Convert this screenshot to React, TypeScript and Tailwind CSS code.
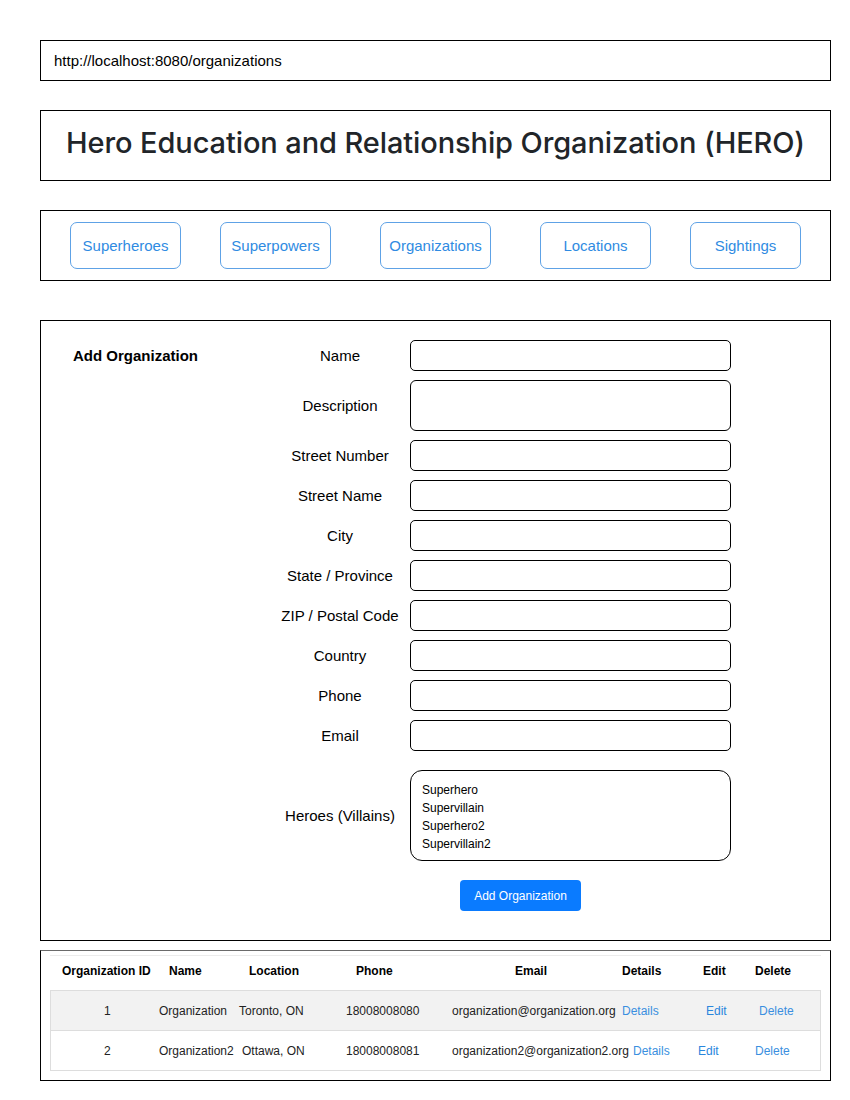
import React from 'react';

const navItems = [
  { label: 'Superheroes', ml: 'ml-[29px]' },
  { label: 'Superpowers', ml: 'ml-[39px]' },
  { label: 'Organizations', ml: 'ml-[49px]' },
  { label: 'Locations', ml: 'ml-[49px]' },
  { label: 'Sightings', ml: 'ml-[39px]' },
];

const fields = [
  { label: 'Name', h: 'h-[31px]' },
  { label: 'Description', h: 'h-[51px]' },
  { label: 'Street Number', h: 'h-[31px]' },
  { label: 'Street Name', h: 'h-[31px]' },
  { label: 'City', h: 'h-[31px]' },
  { label: 'State / Province', h: 'h-[31px]' },
  { label: 'ZIP / Postal Code', h: 'h-[31px]' },
  { label: 'Country', h: 'h-[31px]' },
  { label: 'Phone', h: 'h-[31px]' },
  { label: 'Email', h: 'h-[31px]' },
];

const heroes = ['Superhero', 'Supervillain', 'Superhero2', 'Supervillain2'];

// cell widths are spacing from one text start to the next
const headW = ['w-[107px]', 'w-[80px]', 'w-[107px]', 'w-[159px]', 'w-[107px]', 'w-[81px]', 'w-[52px]', 'w-[60px]'];
const row1W = ['w-[55px]', 'w-[80px]', 'w-[107px]', 'w-[106px]', 'w-[170px]', 'w-[84px]', 'w-[53px]', 'w-[50px]'];
const row2W = ['w-[55px]', 'w-[83px]', 'w-[104px]', 'w-[106px]', 'w-[181px]', 'w-[65px]', 'w-[57px]', 'w-[50px]'];

const headers = ['Organization ID', 'Name', 'Location', 'Phone', 'Email', 'Details', 'Edit', 'Delete'];
const rows = [
  { cells: ['1', 'Organization', 'Toronto, ON', '18008008080', 'organization@organization.org'], widths: row1W, bg: 'bg-[#f2f2f2]' },
  { cells: ['2', 'Organization2', 'Ottawa, ON', '18008008081', 'organization2@organization2.org'], widths: row2W, bg: 'bg-white' },
];

export default function App() {
  return (
    <div className="min-h-screen w-[850px] bg-white font-['Liberation_Sans',Arial,sans-serif] text-black">
      <div className="pt-[40px] pl-[40px]">
        {/* url bar */}
        <div className="w-[791px] h-[41px] border border-black flex items-center pl-[13px] pt-[2px] text-[15px]">
          http://localhost:8080/organizations
        </div>

        {/* title */}
        <div className="mt-[29px] w-[791px] h-[71px] border border-black flex items-center justify-center pb-[6px]">
          <h1 className="font-['Inter',sans-serif] text-[29px] font-medium text-[#212529] tracking-[-0.1px]">
            Hero Education and Relationship Organization (HERO)
          </h1>
        </div>

        {/* nav */}
        <div className="mt-[29px] w-[791px] h-[71px] border border-black flex items-center">
          {navItems.map((n) => (
            <button
              key={n.label}
              className={`${n.ml} w-[111px] h-[47px] pt-[2px] rounded-[7px] border border-[#5ea2e6] text-[15px] text-[#2f8be2] bg-white flex items-center justify-center`}
            >
              {n.label}
            </button>
          ))}
        </div>

        {/* add form */}
        <div className="mt-[39px] w-[791px] h-[621px] border border-black pt-[19px] flex">
          <div className="w-[229px] pl-[32px]">
            <div className="h-[31px] pt-[2px] flex items-center text-[15px] font-bold">Add Organization</div>
          </div>
          <div className="flex flex-col">
            <div className="flex flex-col gap-[9px]">
              {fields.map((f) => (
                <div key={f.label} className="flex">
                  <div className={`w-[140px] ${f.h} pt-[2px] flex items-center justify-center text-[15px] whitespace-nowrap`}>{f.label}</div>
                  {f.label === 'Description' ? (
                    <textarea className={`w-[321px] ${f.h} border border-black rounded-[6px] resize-none`} />
                  ) : (
                    <input className={`w-[321px] ${f.h} border border-black rounded-[5px]`} />
                  )}
                </div>
              ))}
            </div>
            <div className="flex mt-[19px]">
              <div className="w-[140px] h-[91px] pt-[2px] flex items-center justify-center text-[15px] whitespace-nowrap">Heroes (Villains)</div>
              <div className="w-[321px] h-[91px] border border-black rounded-[12px] pl-[11px] pt-[10px] text-[12px] leading-[18px]">
                {heroes.map((h) => (
                  <div key={h}>{h}</div>
                ))}
              </div>
            </div>
            <div className="mt-[19px] pl-[190px]">
              <button className="w-[121px] h-[31px] rounded-[4px] bg-[#0a7bff] text-white text-[12px] flex items-center justify-center">
                Add Organization
              </button>
            </div>
          </div>
        </div>

        {/* table */}
        <div className="mt-[9px] w-[791px] h-[131px] border border-black border-t-[#6b6b6b] pt-[4px] pl-[9px]">
          <div className="w-[771px] text-[12px]">
            <div className="h-[35px] pb-[4px] border-t border-[#ececec] flex items-center pl-[12px] font-bold">
              {headers.map((h, i) => (
                <div key={h} className={`${headW[i]} shrink-0 whitespace-nowrap`}>{h}</div>
              ))}
            </div>
            <div className="border border-[#dddddd] border-t-0">
              {rows.map((r) => (
                <div key={r.cells[0]} className={`h-[40px] border-t border-[#dddddd] flex items-center pl-[53px] text-[#222] ${r.bg}`}>
                  {r.cells.map((c, i) => (
                    <div key={i} className={`${r.widths[i]} shrink-0 whitespace-nowrap`}>{c}</div>
                  ))}
                  <div className={`${r.widths[5]} shrink-0 text-[#3a8fe0]`}>Details</div>
                  <div className={`${r.widths[6]} shrink-0 text-[#2a86dd]`}>Edit</div>
                  <div className={`${r.widths[7]} shrink-0 text-[#3a8fe0]`}>Delete</div>
                </div>
              ))}
            </div>
          </div>
        </div>
      </div>
    </div>
  );
}
